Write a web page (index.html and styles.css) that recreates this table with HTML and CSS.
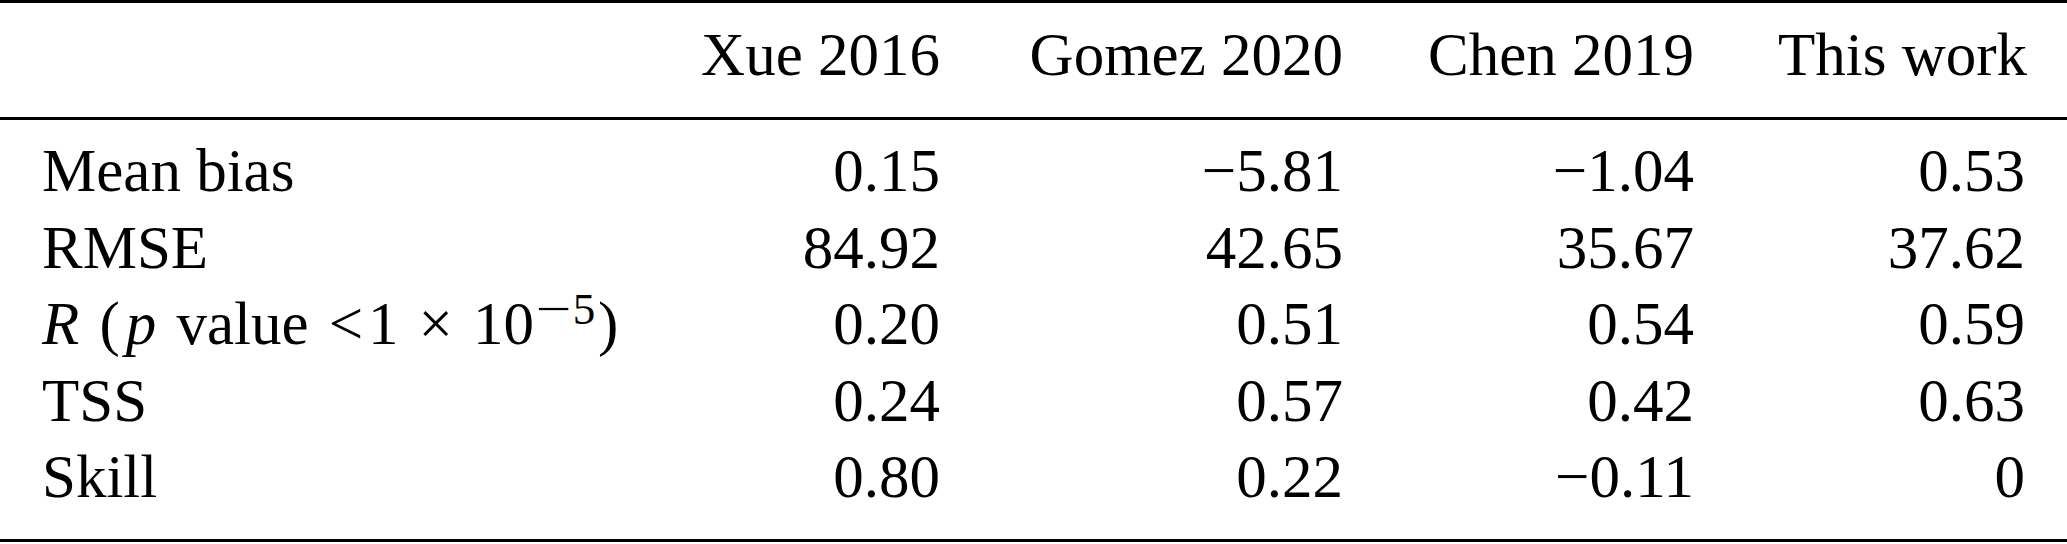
FILE: index.html
```html
<!DOCTYPE html>
<html lang="en">
<head>
<meta charset="utf-8">
<title>Comparison table</title>
<link rel="stylesheet" href="styles.css">
</head>
<body>
<table class="results">
  <colgroup>
    <col class="c-label">
    <col class="c-xue">
    <col class="c-gomez">
    <col class="c-chen">
    <col class="c-this">
  </colgroup>
  <thead>
    <tr>
      <th class="label"></th>
      <th>Xue 2016</th>
      <th>Gomez 2020</th>
      <th>Chen 2019</th>
      <th>This work</th>
    </tr>
  </thead>
  <tbody>
    <tr class="first">
      <td class="label">Mean bias</td>
      <td>0.15</td>
      <td>&minus;5.81</td>
      <td>&minus;1.04</td>
      <td>0.53</td>
    </tr>
    <tr>
      <td class="label">RMSE</td>
      <td>84.92</td>
      <td>42.65</td>
      <td>35.67</td>
      <td>37.62</td>
    </tr>
    <tr>
      <td class="label formula"><i>R</i> (<i class="pv">p</i> value <span class="lt">&lt;</span>1 &times; 10<sup class="exp"><span class="neg">&minus;</span>5</sup>)</td>
      <td>0.20</td>
      <td>0.51</td>
      <td>0.54</td>
      <td>0.59</td>
    </tr>
    <tr>
      <td class="label">TSS</td>
      <td>0.24</td>
      <td>0.57</td>
      <td>0.42</td>
      <td>0.63</td>
    </tr>
    <tr class="last">
      <td class="label">Skill</td>
      <td>0.80</td>
      <td>0.22</td>
      <td>&minus;0.11</td>
      <td>0</td>
    </tr>
  </tbody>
</table>
</body>
</html>
```
FILE: styles.css
```css
html, body {
  margin: 0;
  padding: 0;
  background: #ffffff;
}

body {
  font-family: "Liberation Serif", "Times New Roman", serif;
  color: #000000;
}

.results {
  width: 2067px;
  table-layout: fixed;
  border-collapse: separate;
  border-spacing: 0;
  font-size: 61px;
  line-height: 76.5px;
}

.c-label { width: 659px; }
.c-xue { width: 323px; }
.c-gomez { width: 403px; }
.c-chen { width: 351px; }
.c-this { width: 331px; }

.results th,
.results td {
  padding: 0 42px;
  text-align: right;
  font-weight: normal;
  white-space: nowrap;
  vertical-align: baseline;
}

.results .label {
  text-align: left;
}

.results thead th {
  border-top: 3px solid #000000;
  border-bottom: 3px solid #000000;
  padding-top: 14px;
  padding-bottom: 23.5px;
}

.results tr.first td {
  padding-top: 13px;
}

.results tr.last td {
  padding-bottom: 23.5px;
  border-bottom: 3px solid #000000;
}

.formula {
  word-spacing: 0.08em;
}

.pv {
  margin-left: 0.1em;
}

.lt {
  margin-right: 0.08em;
}

.exp {
  font-size: 0.74em;
  line-height: 0;
  vertical-align: 0.44em;
  margin-left: 0.05em;
  margin-right: 0.06em;
}

.neg {
  display: inline-block;
  transform: scaleX(1.4);
  margin: 0 0.14em 0 0.1em;
}
```
